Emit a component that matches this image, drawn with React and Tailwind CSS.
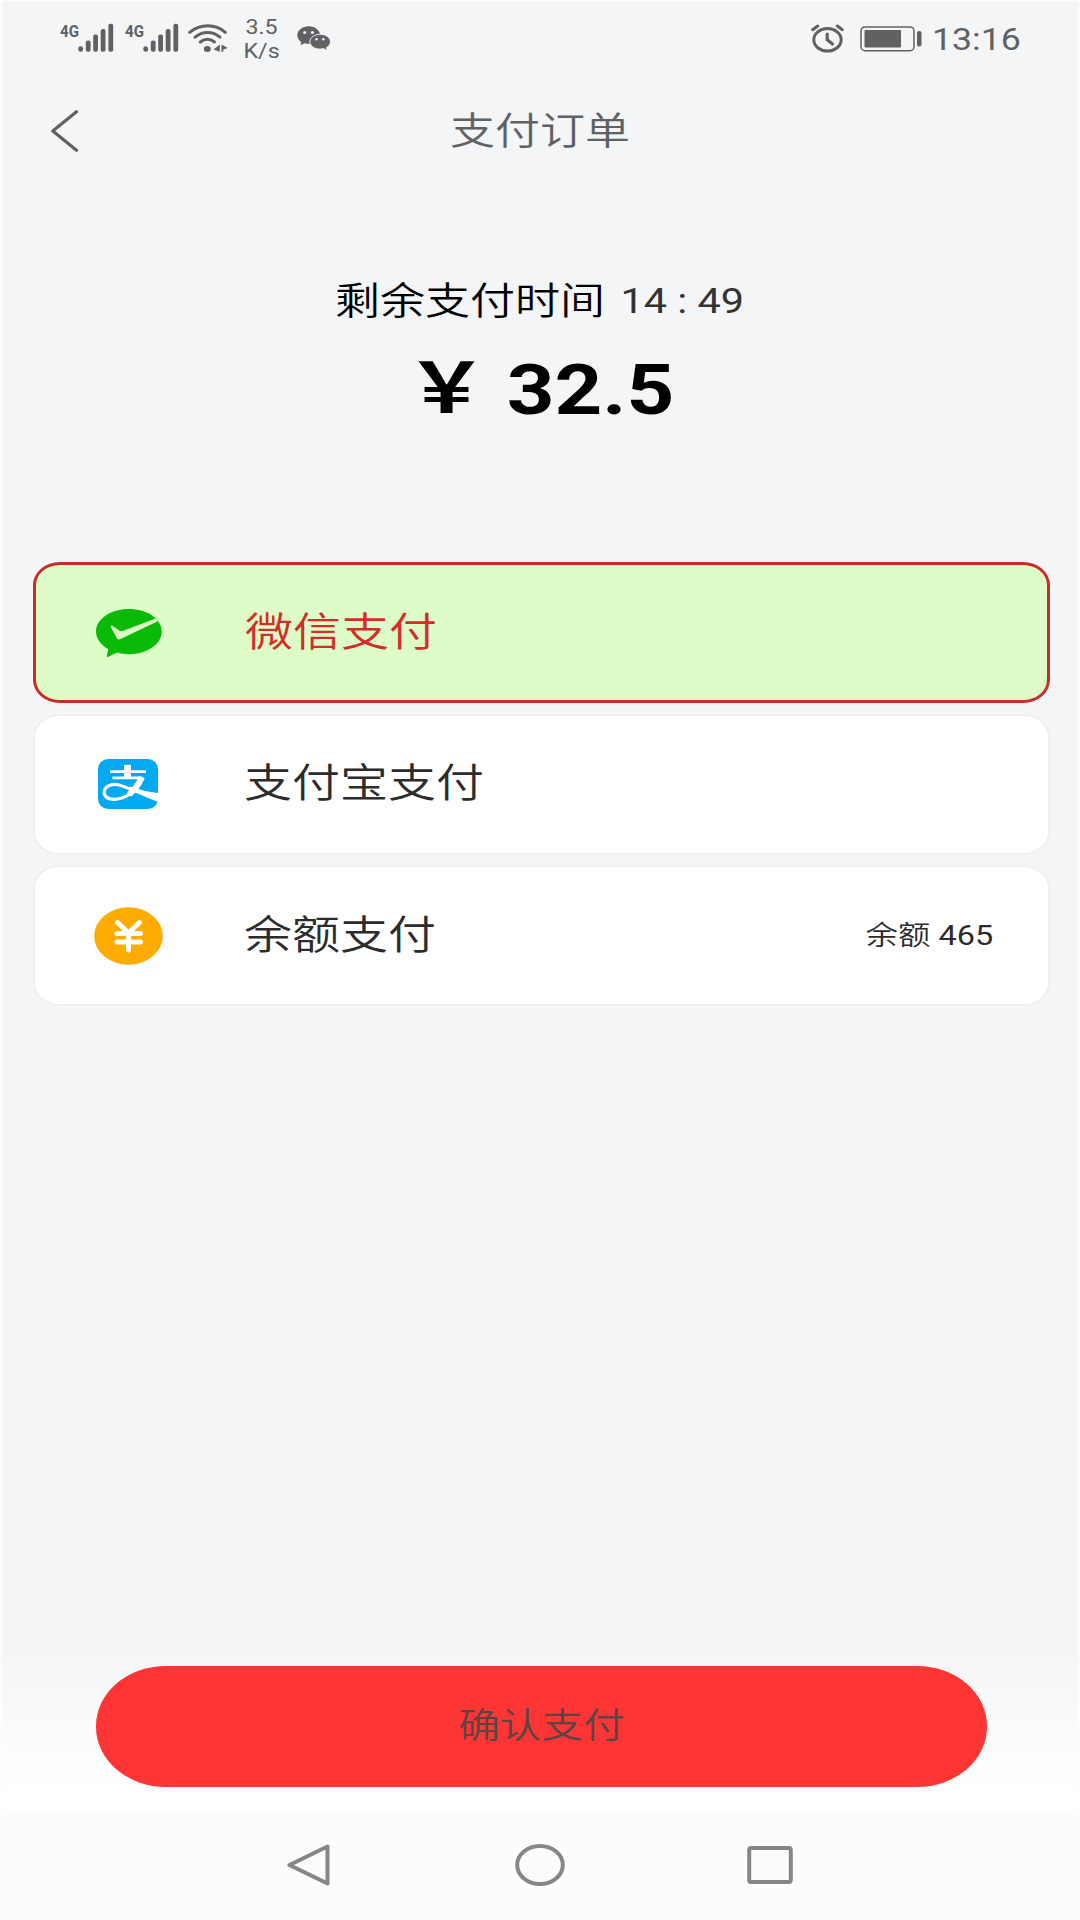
import React, { useState } from 'react';

const SignalIcon = () => (
    <svg width="55" height="30" viewBox="0 0 55 30" fill="#606163">
        <text x="0" y="13.5" fontSize="16" fontWeight="700" fontFamily="Roboto, sans-serif" textLength="19" lengthAdjust="spacingAndGlyphs">4G</text>
        <rect x="18.3" y="23.2" width="4.8" height="5.6" rx="2.4" />
        <rect x="25.8" y="17.5" width="4.8" height="11.3" rx="2" />
        <rect x="33.2" y="11.5" width="4.8" height="17.3" rx="2" />
        <rect x="40.7" y="6" width="4.8" height="22.8" rx="2" />
        <rect x="48.4" y="0.8" width="4.8" height="28" rx="2" />
    </svg>
);

const WifiIcon = () => (
    <svg width="40" height="30" viewBox="0 0 40 30" fill="none" stroke="#606163" strokeWidth="3" strokeLinecap="round">
        <path d="M1.7 9.3C12.5 0.6 27.2 0.6 37.3 9.3" />
        <path d="M7 14.2C14.5 7.8 24.8 7.8 32 14.2" />
        <path d="M12.3 19C16.8 15.6 22.2 15.6 26.4 19" />
        <ellipse cx="19.3" cy="26" rx="3.5" ry="2.9" fill="#606163" stroke="none" />
        <path d="M31.8 21.5v7.3L25.5 26.4zM33.5 21.5v7.3h1.8v-2.2l4.5-1.7z" fill="#606163" stroke="none" />
    </svg>
);

const ChatIcon = () => (
    <svg width="34" height="25" viewBox="0 0 34 25" fill="#606163">
        <path d="M11.7 0.3C5.4 0.3 0.3 4.3 0.3 9.3c0 2.8 1.6 5.2 4 6.9l-.9 3 4.2-2c1.3.4 2.7.6 4.1.6 6.4 0 11.4-3.9 11.4-8.6S18.1 0.3 11.7 0.3z" />
        <path d="M23.1 8.3c-5.7 0-10.2 3.3-10.2 7.4s4.5 7.4 10.2 7.4c1.2 0 2.4-.2 3.5-.5l3.7 2-.8-2.9c2.4-1.4 3.9-3.6 3.9-6 0-4.1-4.6-7.4-10.3-7.4z" stroke="#f3f4f7" strokeWidth="0.9" />
        <g fill="#f3f4f7">
            <circle cx="7.7" cy="6.6" r="1.5" />
            <circle cx="15.4" cy="6.6" r="1.5" />
            <circle cx="19.5" cy="13.2" r="1.2" />
            <circle cx="26.4" cy="13.2" r="1.2" />
        </g>
    </svg>
);

const AlarmIcon = () => (
    <svg width="33" height="29" viewBox="0 0 33 29" fill="none" stroke="#606163" strokeLinecap="round" strokeLinejoin="round">
        <ellipse cx="16.5" cy="15.8" rx="13.7" ry="11.2" strokeWidth="3" />
        <path d="M16.2 10v5.8l5.3 4.2" strokeWidth="3.2" />
        <path d="M1.7 5.7L6.7 2M31.3 5.7L26.3 2" strokeWidth="3" />
    </svg>
);

const BatteryIcon = () => (
    <svg width="62" height="26" viewBox="0 0 62 26">
        <rect x="1" y="0.9" width="53" height="23.8" rx="4" fill="none" stroke="#606163" strokeWidth="1.5" />
        <rect x="4.5" y="4" width="36.5" height="17.5" rx="1" fill="#606163" />
        <rect x="57" y="5" width="4.5" height="15.5" rx="2" fill="#606163" />
    </svg>
);

const WechatPayIcon = () => (
    <svg width="66" height="48" viewBox="0 0 66 48">
        <path d="M33 0C14.8 0 0 10 0 22.5c0 7.2 4.9 13.3 12.3 17.7L10.7 47c0 .9.7 1.2 1.5.7l9-4.1c3.7 1 7.6 1.6 11.8 1.6 18.2 0 32.8-10.2 32.8-22.7S51.2 0 33 0z" fill="#09bb07" />
        <path d="M61.8 12.3L24.5 30.1c-1.6.7-2.9.5-3.7-.9L15 18.2c-.7-1.4.5-2 1.7-1.2l6.5 4.5c1.2.7 2.5.8 4 .3L59.5 9.5z" fill="#defcc6" />
    </svg>
);

const AlipayIcon = () => (
    <svg width="60" height="50" viewBox="0 0 60 50">
        <rect width="60" height="50" rx="10" fill="#02a9f1" />
        <g fill="none" stroke="#fff">
            <path d="M12 12.7h36M14.5 18.9h29" strokeWidth="2.7" />
            <path d="M29.5 5.8v13" strokeWidth="6.8" />
            <path d="M44 18C39.5 30 29 40 16.5 40.3 9 40.5 5.5 36.5 6.3 32.3 7.3 27 14 24.3 21 26c5 1.2 10 4 16 6" strokeWidth="3.2" />
            <path d="M44 18C40.5 26 36.5 31 31 35.5" strokeWidth="6" />
        </g>
        <path d="M32 27.5C42 31 51 33 60 34V43C50 39 41 35 31 31z" fill="#fff" />
    </svg>
);

const BalanceIcon = () => (
    <svg width="69" height="58" viewBox="0 0 69 58">
        <ellipse cx="34.5" cy="29" rx="34.3" ry="28.8" fill="#ffab00" />
        <path d="M23.5 15.5L34.5 26L45.5 15.5M23 26.6h23.5M23 35h23.5M34.5 26v17" fill="none" stroke="#fff" strokeWidth="5" strokeLinecap="round" strokeLinejoin="round" />
    </svg>
);

const methods = [
    { id: 'wechat', label: '微信支付', Icon: WechatPayIcon },
    { id: 'alipay', label: '支付宝支付', Icon: AlipayIcon },
    { id: 'balance', label: '余额支付', Icon: BalanceIcon, balance: 465 },
];

const StatusBar = () => (
    <div className="flex h-[76px] justify-between pl-[58px] pr-[58px] text-[#606163]">
        <div className="flex">
            <div className="flex gap-[10px] pt-[22px]">
                <SignalIcon />
                <SignalIcon />
            </div>
            <div className="ml-[8px] pt-[22px]"><WifiIcon /></div>
            <div className="ml-[15px] w-[54px] pt-[14px] text-[20px] leading-6">
                <div className="w-8 origin-left scale-x-[1.16] text-center">3.5</div>
                <div className="w-8 origin-left scale-x-[1.16] text-center">K/s</div>
            </div>
            <div className="pt-[25px]"><ChatIcon /></div>
        </div>
        <div className="flex">
            <div className="pt-[23px]"><AlarmIcon /></div>
            <div className="ml-4 pt-[25px]"><BatteryIcon /></div>
            <div className="ml-[10px] w-[88px] pt-[19px] text-[31px] leading-10">
                <div className="origin-left scale-x-[1.15]">13:16</div>
            </div>
        </div>
    </div>
);

const App = () => {
    const [selected, setSelected] = useState('wechat');

    return (
        <div className="flex h-[1920px] w-[1080px] flex-col overflow-hidden border-x-2 border-t border-[#fcfdfd] bg-[#f3f5f7] font-['Roboto','Noto_Sans_CJK_SC',sans-serif]">
            <StatusBar />

            <header className="grid h-[108px] grid-cols-[200px_1fr_200px] items-center">
                <button className="pl-[49px]" onClick={() => window.history.back()}>
                    <svg width="28" height="42" viewBox="0 0 28 42" fill="none" stroke="#606163" strokeWidth="3.2" strokeLinecap="round" strokeLinejoin="round">
                        <path d="M25.5 1.8L1.8 21L25.5 40.2" />
                    </svg>
                </button>
                <h1 className="scale-x-[1.2] text-center text-[37.5px] font-[350] leading-[56px] text-[#606163]">支付订单</h1>
            </header>

            <section className="flex h-[377px] flex-col items-center pt-[88px]">
                <div className="flex scale-x-[1.2] items-center text-[37.5px] font-[350] leading-[56px] text-black">
                    <span>剩余支付时间</span>
                    <span className="ml-[13px] text-[34.5px] font-normal text-[#333]">14 : 49</span>
                </div>
                <div className="mt-4 flex scale-x-[1.19] items-center gap-4 text-[70px] font-bold leading-[90px] text-black">
                    <span className="text-[69px]">￥</span>
                    <span>32.5</span>
                </div>
            </section>

            <ul className="flex flex-col gap-[10.5px] pl-[31px] pr-[28px]">
                {methods.map(({ id, label, Icon, balance }) => {
                    const active = id === selected;
                    return (
                        <li
                            key={id}
                            onClick={() => setSelected(id)}
                            className={`flex h-[141px] items-center rounded-[27px/23px] pr-[55px] ${active ? 'border-3 border-[#cc2b28] bg-[#defcc8] text-[#d42c27]' : 'border-2 border-[#f0f0f1] bg-white text-[#2c2c2d]'}`}
                        >
                            <div className="ml-[52px] flex w-[82px] justify-center"><Icon /></div>
                            <span className="ml-[75px] origin-left scale-x-[1.2] text-[40px] font-[350] leading-[60px]">{label}</span>
                            {balance && (
                                <span className="ml-auto origin-right scale-x-[1.18] text-[27.5px]">
                                    <span className="font-[350]">余额</span> {balance}
                                </span>
                            )}
                        </li>
                    );
                })}
            </ul>

            <div className="mt-auto flex h-[170px] shrink-0 flex-col items-center bg-linear-to-b from-[#f3f5f7] to-white to-90% pl-[2px] pt-[26px]">
                <button className="h-[121px] w-[891px] rounded-[70px/60px] bg-[#fd3534] text-[#5c4444]">
                    <span className="block scale-x-[1.19] text-[35px] font-[350] leading-[52px]">确认支付</span>
                </button>
            </div>

            <nav className="flex h-[110px] shrink-0 items-center justify-center gap-[182px] bg-[#fcfcfc]">
                <svg className="mr-[3px]" width="43" height="42" viewBox="0 0 43 42" fill="none" stroke="#868686" strokeWidth="4" strokeLinejoin="round">
                    <path d="M40.5 2.5V39.5L2.5 21z" />
                </svg>
                <svg width="50" height="42" viewBox="0 0 50 42" fill="none" stroke="#868686" strokeWidth="4">
                    <ellipse cx="25" cy="21" rx="22.8" ry="19" />
                </svg>
                <svg width="46" height="38" viewBox="0 0 46 38" fill="none" stroke="#868686" strokeWidth="4">
                    <rect x="2.2" y="2" width="41.6" height="34" rx="2" />
                </svg>
            </nav>
        </div>
    );
};

export default App;
